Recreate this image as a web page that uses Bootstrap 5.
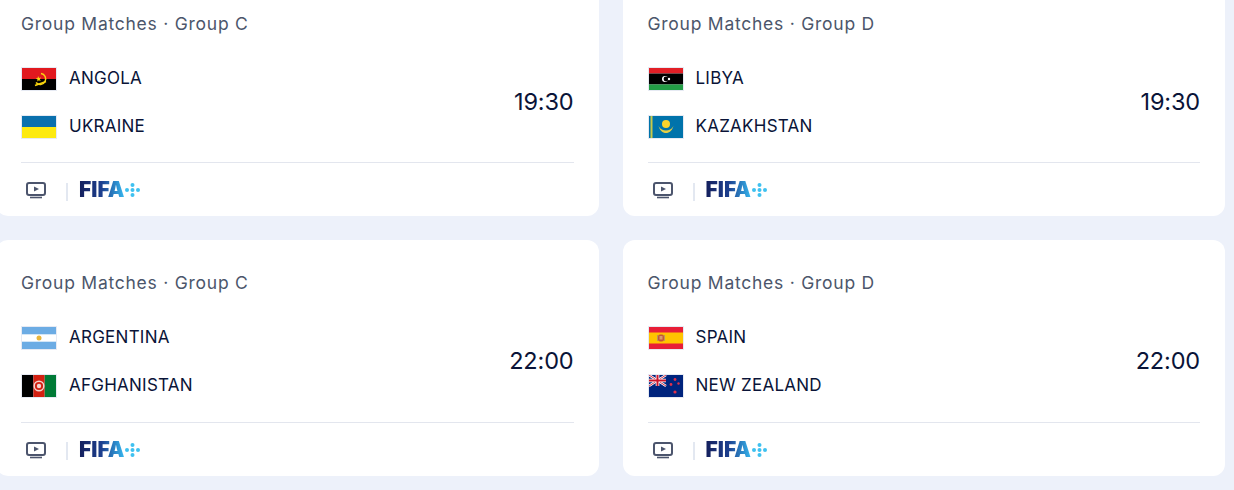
<!DOCTYPE html>
<html lang="en">
<head>
<meta charset="utf-8">
<title>Group Matches</title>
<link rel="stylesheet" href="https://cdn.jsdelivr.net/npm/bootstrap@5.3.0/dist/css/bootstrap.min.css">
<style>
html,body{height:490px;overflow:hidden;background:#edf1fa;font-family:"Inter","Liberation Sans",sans-serif}
.board{width:1229px;margin:-19.6px 0 0 -4px}
.board>.row{--bs-gutter-y:23.5px}
.fixture{background:#fff;border-radius:12px;height:236px;padding:32.2px 25px 0}
.stage{font-size:17.5px;line-height:22px;color:#4c566b;letter-spacing:.75px;height:22px}
.teams{height:118px;margin:9px 0 .6px}
.team{height:48px;font-size:17px;color:#0a1438;letter-spacing:.25px;gap:12px}
.flag{width:36px;height:24px;display:block;border:1px solid #e6eaf3;flex:none}
.kick{font-size:23.5px;color:#0a1438;line-height:1;letter-spacing:-.15px;margin-bottom:2px}
.foot{border-top:1px solid #e3e6ee;height:54px;padding-top:1px}
.tv{width:22px;height:18px;margin-left:4px;display:block;flex:none}
.sep{width:2px;height:18px;background:#e3e8f1;margin:3px 11px 0 19px;flex:none}
.fifa{font-weight:900;font-size:21px;line-height:18px;letter-spacing:0;color:#1a2f6e;background:linear-gradient(90deg,#141f5c 0%,#1c3f8e 50%,#37b6ee 100%);-webkit-background-clip:text;background-clip:text;-webkit-text-fill-color:transparent}
.dots{width:17px;height:14px;display:block;flex:none}
</style>
</head>
<body>
<svg width="0" height="0" class="d-block position-absolute">
<defs>
<symbol id="f-ao" viewBox="0 0 34 22"><rect width="34" height="11" fill="#e1191f"/><rect y="11" width="34" height="11" fill="#000"/><path d="M19 5.500a5.500 5.500 0 1 1-5 9" fill="none" stroke="#f8d50e" stroke-width="1.500"/><path d="M13 17.500l11-4" stroke="#f8d50e" stroke-width="1.500"/><path d="M16 8l1.100 2 2-.4-1.300 1.600 1 1.900-2-.8-1.500 1.300.2-2-1.800-1 2-.5z" fill="#f8d50e"/></symbol>
<symbol id="f-ua" viewBox="0 0 34 22"><rect width="34" height="11" fill="#0a70ad"/><rect y="11" width="34" height="11" fill="#fdea10"/></symbol>
<symbol id="f-ly" viewBox="0 0 34 22"><rect width="34" height="5.500" fill="#e21f26"/><rect y="5.500" width="34" height="11" fill="#000"/><rect y="16.500" width="34" height="5.500" fill="#239e46"/><circle cx="16" cy="11" r="3" fill="#fff"/><circle cx="17" cy="11" r="2.400" fill="#000"/><circle cx="20" cy="11" r="1.200" fill="#fff"/></symbol>
<symbol id="f-kz" viewBox="0 0 34 22"><rect width="34" height="22" fill="#0073ab"/><rect x="1.500" width="2" height="22" fill="#c8c94a"/><circle cx="17" cy="8" r="4" fill="#fbd32c"/><path d="M9.500 10c2 6 5 7 7.500 7s5.500-1 7.500-7c-2 3.500-4.500 4.500-7.500 4.500S11.500 13.500 9.500 10z" fill="#e6cf45"/></symbol>
<symbol id="f-ar" viewBox="0 0 34 22"><rect width="34" height="22" fill="#6cace4"/><rect y="7.300" width="34" height="7.400" fill="#fff"/><circle cx="17" cy="11" r="2.500" fill="#e8b53c"/></symbol>
<symbol id="f-af" viewBox="0 0 34 22"><rect width="11.400" height="22" fill="#000"/><rect x="11.400" width="11.300" height="22" fill="#d32011"/><rect x="22.700" width="11.300" height="22" fill="#007a36"/><circle cx="17" cy="11" r="4.800" fill="none" stroke="#f3d4d0" stroke-width="1.400"/><circle cx="17" cy="11" r="2.200" fill="#f3d4d0"/></symbol>
<symbol id="f-es" viewBox="0 0 34 22"><rect width="34" height="22" fill="#e81e37"/><rect y="5.500" width="34" height="11" fill="#ffc400"/><rect x="9" y="7.500" width="6" height="7" rx="2" fill="#c4553a"/><rect x="10.500" y="9" width="3" height="3.500" fill="#d99a6c"/><rect x="8" y="8" width="1" height="6" fill="#b79a5a"/><rect x="15" y="8" width="1" height="6" fill="#b79a5a"/></symbol>
<symbol id="f-nz" viewBox="0 0 34 22"><rect width="34" height="22" fill="#00247d"/><path d="M0 0l17 11M17 0L0 11" stroke="#fff" stroke-width="2.400"/><path d="M0 0l17 11M17 0L0 11" stroke="#cc142b" stroke-width=".9"/><path d="M8.500 0v11M0 5.500h17" stroke="#fff" stroke-width="3.600"/><path d="M8.500 0v11M0 5.500h17" stroke="#cc142b" stroke-width="2"/><g fill="#e0304a"><circle cx="26" cy="4.500" r="1.400"/><circle cx="22" cy="9.500" r="1.400"/><circle cx="29.500" cy="8.500" r="1.200"/><circle cx="26" cy="17" r="1.600"/></g></symbol>
<symbol id="i-tv" viewBox="0 0 22 18"><rect x="2" y="2" width="18" height="12" rx="2" fill="none" stroke="#4c556d" stroke-width="2"/><path d="M5 16.500h12" stroke="#4c556d" stroke-width="1.600"/><path d="M9 5.500l5 2.500-5 2.500z" fill="#4c556d"/></symbol>
<symbol id="i-dots" viewBox="0 0 17 14"><g fill="#3fc1f0"><circle cx="8.500" cy="2" r="2"/><circle cx="3" cy="7" r="2"/><circle cx="8.500" cy="7" r="2"/><circle cx="14" cy="7" r="2"/><circle cx="8.500" cy="12" r="2"/></g></symbol>
</defs>
</svg>

<main class="board">
<div class="row g-4 m-0">

<div class="col-6 mt-0 ps-0">
<article class="fixture">
<div class="stage">Group Matches · Group C</div>
<div class="teams d-flex justify-content-between align-items-center">
<div>
<div class="team d-flex align-items-center"><svg class="flag"><use href="#f-ao"/></svg><span>ANGOLA</span></div>
<div class="team d-flex align-items-center"><svg class="flag"><use href="#f-ua"/></svg><span>UKRAINE</span></div>
</div>
<div class="kick">19:30</div>
</div>
<div class="foot d-flex align-items-center"><svg class="tv"><use href="#i-tv"/></svg><span class="sep"></span><span class="fifa">FIFA</span><svg class="dots"><use href="#i-dots"/></svg></div>
</article>
</div>

<div class="col-6 mt-0 pe-0">
<article class="fixture">
<div class="stage">Group Matches · Group D</div>
<div class="teams d-flex justify-content-between align-items-center">
<div>
<div class="team d-flex align-items-center"><svg class="flag"><use href="#f-ly"/></svg><span>LIBYA</span></div>
<div class="team d-flex align-items-center"><svg class="flag"><use href="#f-kz"/></svg><span>KAZAKHSTAN</span></div>
</div>
<div class="kick">19:30</div>
</div>
<div class="foot d-flex align-items-center"><svg class="tv"><use href="#i-tv"/></svg><span class="sep"></span><span class="fifa">FIFA</span><svg class="dots"><use href="#i-dots"/></svg></div>
</article>
</div>

<div class="col-6 ps-0">
<article class="fixture">
<div class="stage">Group Matches · Group C</div>
<div class="teams d-flex justify-content-between align-items-center">
<div>
<div class="team d-flex align-items-center"><svg class="flag"><use href="#f-ar"/></svg><span>ARGENTINA</span></div>
<div class="team d-flex align-items-center"><svg class="flag"><use href="#f-af"/></svg><span>AFGHANISTAN</span></div>
</div>
<div class="kick">22:00</div>
</div>
<div class="foot d-flex align-items-center"><svg class="tv"><use href="#i-tv"/></svg><span class="sep"></span><span class="fifa">FIFA</span><svg class="dots"><use href="#i-dots"/></svg></div>
</article>
</div>

<div class="col-6 pe-0">
<article class="fixture">
<div class="stage">Group Matches · Group D</div>
<div class="teams d-flex justify-content-between align-items-center">
<div>
<div class="team d-flex align-items-center"><svg class="flag"><use href="#f-es"/></svg><span>SPAIN</span></div>
<div class="team d-flex align-items-center"><svg class="flag"><use href="#f-nz"/></svg><span>NEW ZEALAND</span></div>
</div>
<div class="kick">22:00</div>
</div>
<div class="foot d-flex align-items-center"><svg class="tv"><use href="#i-tv"/></svg><span class="sep"></span><span class="fifa">FIFA</span><svg class="dots"><use href="#i-dots"/></svg></div>
</article>
</div>

</div>
</main>
</body>
</html>
